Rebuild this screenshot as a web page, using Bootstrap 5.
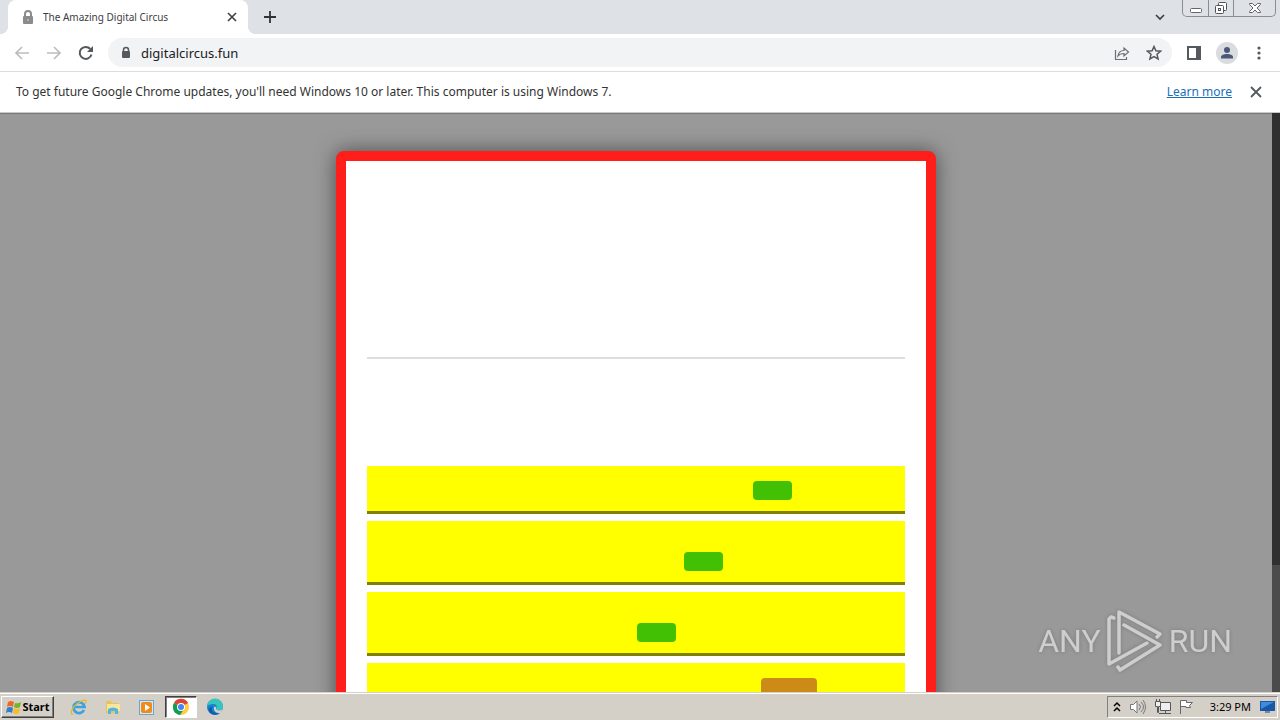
<!DOCTYPE html>
<html lang="en">
<head>
<meta charset="utf-8">
<meta name="viewport" content="width=device-width, initial-scale=1">
<title>The Amazing Digital Circus</title>
<link href="https://cdn.jsdelivr.net/npm/bootstrap@5.3.0/dist/css/bootstrap.min.css" rel="stylesheet">
<style>
body{font-family:Tahoma,"Noto Sans","Liberation Sans",sans-serif;font-size:12px;line-height:16px;color:#333}
button{background:none;border:0;padding:0;color:#5f6368}
button,.site-icon{display:flex;align-items:center;justify-content:center;flex:none}
svg{display:block;flex:none}
.tab-strip{height:34px;background:#dee1e6;padding-left:8px}
.page-tab{width:240px;background:#fff;border-radius:8px 8px 0 0;padding:0 10px 0 14px;font-size:10px;color:#3c4043}
.page-tab::before,.page-tab::after{content:"";position:absolute;bottom:0;width:8px;height:8px}
.page-tab::before{left:-8px;background:radial-gradient(circle at 0 0,#dee1e6 8px,#fff 8px)}
.page-tab::after{right:-8px;background:radial-gradient(circle at 100% 0,#dee1e6 8px,#fff 8px)}
.win-buttons{height:17px;border:1px solid #8a8d94;border-top:0;border-radius:0 0 5px 5px;margin-right:4px}
.win-buttons button{width:25px;height:16px}
.win-buttons button+button{border-left:1px solid #8a8d94}
.win-buttons button:last-child{width:42px}
.tool-bar{height:38px;border-bottom:1px solid #dadce0;padding:0 14px;background:#fff}
.address{height:29px;border-radius:15px;background:#f1f3f4;padding:0 10px 0 12px;margin-left:14px;margin-right:14px}
.address input{border:0;background:none;padding:0;outline:0;color:#202124;font-size:13px;min-width:0}
.avatar{width:22px;height:22px;border-radius:50%;background:#dadce0;margin:0 14px}
.info-bar{height:41px;padding:0 16px;background:#fff;border-bottom:1px solid #c8c8c8}
.info-bar a{color:#1a6fb8}
.page-view{background:#999;box-shadow:inset 0 2px 1px -1px #777}
.view-scroll{width:8px;background:#2f2f2f;padding-top:452px}
.view-thumb{background:#4b4b4b}
.stage-box{width:600px;max-width:100%;margin-top:38px;border:10px solid #ff1e1a;border-radius:8px;background:#ff1e1a;box-shadow:0 0 20px rgba(0,0,0,.5)}
.stage-inner{background:#fff;padding:0 21px}
.intro{height:198px;border-bottom:2px solid #ddd}
.space-title{height:107px}
.entry{background:#ff0;border-bottom:3px solid #808000;height:48px;padding-bottom:11px;margin-bottom:7px}
.entry.tall{height:64px}
.chip{width:39px;height:19px;border-radius:4px;background:#42c004}
.chip.warm{width:56px;background:#cc8b16}
.brand-mark{right:48px;bottom:18px;gap:6px;color:#d4d4d4;opacity:.9;font:32px/64px Roboto,"Liberation Sans",sans-serif;filter:drop-shadow(0 0 2px #777)}
.task-bar{height:28px;background:#d4d0c8;border-top:1px solid #d4d0c8;box-shadow:inset 0 1px #fff;color:#000;padding:3px 2px 2px 1px;font-size:11px}
.start-button{width:53px;height:22px;border:1px solid;border-color:#fff #404040 #404040 #fff;box-shadow:inset -1px -1px #808080;color:#000;font-weight:700;margin-right:9px}
.quick{width:32px;height:22px;margin-right:2px;border:1px solid transparent}
.quick.running{background:#fff;border-color:#404040 #fff #fff #404040;box-shadow:inset 1px 1px #808080}
.tray{height:22px;border:1px solid;border-color:#808080 #fff #fff #808080;padding:0 0 0 5px}
.tray time{font-size:11px;margin-left:15px}
</style>
</head>
<body class="vh-100 d-flex flex-column overflow-hidden bg-white">
<header>
<div class="tab-strip d-flex">
 <div class="page-tab position-relative d-flex align-items-center">
  <svg width="13" height="15" viewBox="0 0 13 15"><path d="M3 6V4a3 3 0 0 1 6 0v2" fill="none" stroke="#8b8b8b" stroke-width="2"/><rect x="1" y="6" width="10" height="8" rx="1" fill="#8b8b8b"/><circle cx="6" cy="10" r="1" fill="#bbb"/></svg>
  <span class="flex-grow-1 text-nowrap ps-2">The Amazing Digital Circus</span>
  <button aria-label="Close tab"><svg width="12" height="12" viewBox="0 0 12 12"><path d="m2 2 8 8m0-8-8 8" stroke="#3c4043" stroke-width="1.6"/></svg></button>
 </div>
 <button class="ms-3" aria-label="New tab"><svg width="12" height="12" viewBox="0 0 12 12"><path d="M6 0v12M0 6h12" stroke="#303338" stroke-width="1.8"/></svg></button>
 <div class="ms-auto d-flex">
  <button class="me-3" aria-label="Search tabs"><svg width="12" height="8" viewBox="0 0 12 8"><path d="m2 2 4 4 4-4" fill="none" stroke="#3c4043" stroke-width="1.7"/></svg></button>
  <div class="win-buttons d-flex">
   <button aria-label="Minimize"><svg width="14" height="14" viewBox="0 0 14 14"><rect x="1.500" y="7.500" width="11" height="4" rx="1" fill="#fff" stroke="#62656c"/></svg></button>
   <button aria-label="Restore"><svg width="14" height="14" viewBox="0 0 14 14" fill="#fff" stroke="#50535a"><rect x="4.500" y="1.500" width="8" height="8" rx="1"/><rect x="1.500" y="4.500" width="8" height="8" rx="1"/><rect x="4.500" y="7.500" width="2" height="2"/></svg></button>
   <button aria-label="Close"><svg width="14" height="14" viewBox="0 0 14 14"><path d="M1.500 2.500h3L7 5l2.500-2.500h3v1L9 7l3.500 3.500v1h-3L7 9l-2.500 2.500h-3v-1L5 7 1.500 3.500z" fill="#fff" stroke="#62656c"/></svg></button>
  </div>
 </div>
</div>
<div class="tool-bar d-flex align-items-center">
 <button aria-label="Back"><svg width="16" height="16" viewBox="0 0 16 16"><path d="M15 8H2m6-6L2 8l6 6" fill="none" stroke="#bdbdbd" stroke-width="1.7"/></svg></button>
 <button class="ms-3" aria-label="Forward"><svg width="16" height="16" viewBox="0 0 16 16"><path d="M1 8h13M8 2l6 6-6 6" fill="none" stroke="#bdbdbd" stroke-width="1.7"/></svg></button>
 <button class="ms-3" aria-label="Reload"><svg width="16" height="16" viewBox="0 0 16 16"><path d="M13.500 9.500A6 6 0 1 1 12.300 4" fill="none" stroke="#55585c" stroke-width="2"/><path d="M15 1v6H9z" fill="#55585c"/></svg></button>
 <div class="address flex-grow-1 d-flex align-items-center">
  <svg width="13" height="14" viewBox="0 0 13 14"><path d="M3.500 6V4a2.500 2.500 0 0 1 5 0v2" fill="none" stroke="#55585c" stroke-width="1.500"/><rect x="2" y="5" width="8" height="7" rx="1" fill="#55585c"/></svg>
  <input class="flex-grow-1 ms-2" type="text" aria-label="Address" value="digitalcircus.fun">
  <button class="me-3" aria-label="Share"><svg width="16" height="16" viewBox="0 0 16 16" fill="none" stroke="#6c6f73" stroke-width="1.200"><path d="M1.500 5v9.500h11V12"/><path d="M4 11c.5-4 2.500-5.500 6-5.500V3l4.500 4-4.500 4V8.500C7.500 8.500 5.500 9 4 11z"/></svg></button>
  <button aria-label="Bookmark"><svg width="16" height="16" viewBox="0 0 16 16"><path d="m8 1.500 1.900 4.300 4.700.4-3.600 3.100 1.100 4.600L8 11.500l-4.100 2.400L5 9.300 1.400 6.200l4.700-.4z" fill="none" stroke="#55585c" stroke-width="1.500"/></svg></button>
 </div>
 <button aria-label="Side panel"><svg width="16" height="16" viewBox="0 0 16 16"><path d="M1 1h14v14H1zM3 3v10h7V3z" fill="#55585c" fill-rule="evenodd"/></svg></button>
 <button class="avatar" aria-label="Profile"><svg width="14" height="14" viewBox="0 0 14 14" fill="#4b5878"><circle cx="7" cy="4" r="3"/><path d="M1 12.500V11c0-4 12-4 12 0v1.500z"/></svg></button>
 <button aria-label="Menu"><svg width="14" height="16" viewBox="0 0 14 16" fill="#55585c"><circle cx="7" cy="3" r="1.600"/><circle cx="7" cy="8" r="1.600"/><circle cx="7" cy="13" r="1.600"/></svg></button>
</div>
<div class="info-bar d-flex align-items-center text-nowrap">
 <span>To get future Google Chrome updates, you'll need Windows 10 or later. This computer is using Windows 7.</span>
 <a class="ms-auto me-3" href="#">Learn more</a>
 <button aria-label="Dismiss"><svg width="16" height="16" viewBox="0 0 16 16"><path d="m3 3 10 10m0-10L3 13" stroke="#55585c" stroke-width="1.800"/></svg></button>
</div>
</header>
<div class="page-view position-relative flex-grow-1 overflow-hidden d-flex">
 <main class="flex-grow-1">
  <div class="stage-box mx-auto"><div class="stage-inner">
   <div class="intro"></div>
   <div class="space-title"></div>
   <div class="entries" id="entries"></div>
  </div></div>
 </main>
 <div class="view-scroll d-flex flex-column"><div class="view-thumb flex-grow-1"></div></div>
 <div class="brand-mark position-absolute d-flex align-items-center">
  <span>ANY</span>
  <svg width="56" height="66" viewBox="0 0 56 66" fill="none" stroke="currentColor" stroke-width="3.500" stroke-linejoin="round" stroke-linecap="round"><path d="m7 10-3-1-2 2v45l38-21"/><path d="M12 45V4l41 22-3 3"/><path d="m17 17 36 20-40 25-2-3"/></svg>
  <span>RUN</span>
 </div>
</div>
<footer class="task-bar d-flex align-items-center">
 <button class="start-button"><svg width="17" height="17" viewBox="0 0 17 17"><path d="M3 3q3-2 6 0L8 8Q5 6 2 8z" fill="#ec6a26"/><path d="M10 4q3 1 6-1l-1 5q-3 2-6 0z" fill="#73b42c"/><path d="M2 9q3-2 6 0l-1 5q-3-2-6 0z" fill="#2d7dd0"/><path d="M9 9q3 2 6 0l-1 5q-3 2-6 0z" fill="#f7bd27"/></svg>Start</button>
 <button class="quick" aria-label="Internet Explorer"><svg width="18" height="18" viewBox="0 0 18 18" fill="none"><path d="M14 12a5.500 5.500 0 1 1 .5-3H5" stroke="#38a3df" stroke-width="2.700"/><path d="M3 16C-1 17 2 9 8 5s10-4 7 1" stroke="#e5b634" stroke-width="1.300"/></svg></button>
 <button class="quick" aria-label="File Explorer"><svg width="18" height="18" viewBox="0 0 18 18"><path d="M2 3h5l1 2h7v10H2z" fill="#e5c45c"/><path d="M3 6h13v7H3z" fill="#f8e69c"/><path d="M4 16v-5q5-3 10 0v5h-3v-3H7v3z" fill="#58b4d9"/></svg></button>
 <button class="quick" aria-label="Media Player"><svg width="18" height="18" viewBox="0 0 18 18"><rect x="1.500" y="2.500" width="14" height="14" fill="#d3e9f8" stroke="#6ca6d0"/><rect x="3" y="4" width="11" height="11" rx="2" fill="#f18a16"/><path d="m7 6 5 3.500L7 13z" fill="#fff"/></svg></button>
 <button class="quick running" aria-label="Google Chrome"><svg width="18" height="18" viewBox="0 0 18 18"><circle cx="9" cy="9" r="8" fill="#ffcd40"/><path d="M9 9 2 5a8 8 0 0 1 14 0z" fill="#dc4437"/><path d="M9 9 2 5a8 8 0 0 0 6 12l4-6z" fill="#0f9d58"/><circle cx="9" cy="9" r="4" fill="#fff"/><circle cx="9" cy="9" r="3" fill="#4285f4"/></svg></button>
 <button class="quick" aria-label="Microsoft Edge"><svg width="18" height="18" viewBox="0 0 18 18"><circle cx="9" cy="9" r="8" fill="#1684d1"/><path d="M1 8a8 8 0 0 1 16 1c0 4-6 4-7 2 2-3 0-5-3-5S2 7 1 8z" fill="#36c4bd"/><path d="M7 8c-3 3 0 8 6 7-4 4-12 0-10-5z" fill="#135ba7"/><path d="M10 11c1 2 6 2 7-1l-2 5c-4 1-8-2-7-6q3-1 2 2z" fill="#d4d0c8"/></svg></button>
 <div class="tray ms-auto d-flex align-items-center text-nowrap">
  <svg width="8" height="12" viewBox="0 0 8 12"><path d="m1 5 3-3 3 3M1 10l3-3 3 3" fill="none" stroke="#000" stroke-width="1.500"/></svg>
  <svg class="ms-2" width="18" height="16" viewBox="0 0 18 16" fill="none" stroke="#77777a"><path d="M1.500 5.500h3L8 2v12l-3.500-3.500h-3z" fill="#fff"/><path d="M10 5q3 3 0 6m2-8q5 5 0 10m2-12q5 7 0 14"/></svg>
  <svg class="ms-2" width="18" height="16" viewBox="0 0 18 16" fill="#eee" stroke="#55575a"><path d="M5.500 3.500h10v8h-10zM4 14.500h12M10.500 12v2"/><path d="M.5 2.500h5v5h-2v6h-1v-6h-2zM1.500 0v2m3-2v2"/></svg>
  <svg class="ms-1" width="18" height="16" viewBox="0 0 18 16" fill="#fff" stroke="#66686b"><path d="M3.500 15V1.500h6v2h6l-3 3 1 2H9v-1H4"/></svg>
  <time class="me-2">3:29 PM</time>
  <svg width="18" height="16" viewBox="0 0 18 16"><path d="M1 2h15v10H1z" fill="#1957a8"/><path d="M2 3h13L2 10z" fill="#3f8bdc"/><path d="M6 12h5v2H6z" fill="#789"/></svg>
 </div>
</footer>
<script src="https://cdn.jsdelivr.net/npm/bootstrap@5.3.0/dist/js/bootstrap.bundle.min.js"></script>
<script>
const rows=[{lead:386},{lead:317,tall:true},{lead:270,tall:true},{lead:394,warm:true}];
document.getElementById('entries').innerHTML=rows.map(r=>`<div class="entry d-flex align-items-end ${r.tall?'tall':''}"><div class="chip ${r.warm?'warm':''}" style="margin-left:${r.lead/538*100}%"></div></div>`).join('');
</script>
</body>
</html>
